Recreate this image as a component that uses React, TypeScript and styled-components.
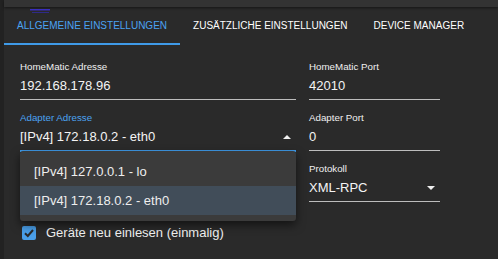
import { createGlobalStyle, styled } from 'styled-components'

const GlobalStyle = createGlobalStyle`
  html, body {
    margin: 0;
    padding: 0;
    background: #2a2a2a;
    font-family: "Liberation Sans", Arial, sans-serif;
    color: #f2f2f2;
  }
`

const Page = styled.div`
  display: flex;
  width: 498px;
  height: 259px;
  overflow: hidden;
  background: #2a2a2a;
`

const SideStrip = styled.div`
  width: 4px;
  flex-shrink: 0;
  background: #222222;
`

const Main = styled.div`
  flex-grow: 1;
  display: flex;
  flex-direction: column;
`

const TopBar = styled.div`
  height: 7px;
  background: #333333;
  box-shadow: 0 1px 3px rgba(0, 0, 0, 0.5);
  padding-left: 26px;
  position: relative;
  z-index: 1;
`

const TabBar = styled.div`
  display: flex;
  height: 38px;
`

type TabProps = { $active?: boolean }
const Tab = styled.div<TabProps>`
  display: flex;
  align-items: center;
  padding: 0 13px;
  font-size: 10px;
  text-transform: uppercase;
  color: ${(p) => (p.$active ? '#4ba3f2' : '#ffffff')};
  border-bottom: 2px solid ${(p) => (p.$active ? '#3f9ae8' : 'transparent')};
  box-sizing: border-box;
`

const Content = styled.div`
  padding: 16px 0 0 16px;
`

const FieldGrid = styled.div`
  display: grid;
  grid-template-columns: 276px 131px;
  column-gap: 13px;
  row-gap: 12px;
`

type FieldProps = { $focused?: boolean }
const Field = styled.div<FieldProps>`
  position: relative;
  display: flex;
  flex-direction: column;
  border-bottom: ${(p) => (p.$focused ? '2px solid #3f9ae8' : '1px solid #bdbdbd')};
  margin-bottom: ${(p) => (p.$focused ? '-1px' : '0')};
`

const Label = styled.div<FieldProps>`
  font-size: 9.75px;
  line-height: 12px;
  color: ${(p) => (p.$focused ? '#4ba3f2' : '#f0f0f0')};
`

const Value = styled.div`
  display: flex;
  align-items: center;
  justify-content: space-between;
  margin-top: 3px;
  padding-bottom: 3px;
  height: 20px;
  font-size: 13px;
  line-height: 20px;
  color: #f4f4f4;
`

const Arrow = styled.svg`
  width: 8px;
  height: 4px;
  margin-right: 5px;
  fill: #f0f0f0;
`

const Menu = styled.div`
  position: absolute;
  top: 100%;
  left: 0;
  right: 0;
  margin-top: 1px;
  padding: 6px 0;
  background: #3b3b3b;
  border-radius: 3px;
  box-shadow: 0 4px 10px rgba(0, 0, 0, 0.55);
  z-index: 2;
`

type MenuItemProps = { $selected?: boolean }
const MenuItem = styled.div<MenuItemProps>`
  height: 29px;
  display: flex;
  align-items: center;
  padding-left: 14px;
  font-size: 13px;
  color: #eeeeee;
  background: ${(p) => (p.$selected ? '#414d59' : 'transparent')};
`

const CheckRow = styled.div`
  display: flex;
  align-items: center;
  gap: 10px;
  margin-top: 23px;
  padding-left: 2px;
  font-size: 13px;
  color: #f0f0f0;
`

const CheckBox = styled.svg`
  width: 14px;
  height: 14px;
`

function ArrowIcon({ up }: { up?: boolean }) {
  return (
    <Arrow viewBox="0 0 8 4">
      {up ? <polygon points="0,4 4,0 8,4" /> : <polygon points="0,0 8,0 4,4" />}
    </Arrow>
  )
}

function App() {
  return (
    <>
      <GlobalStyle />
      <Page>
        <SideStrip />
        <Main>
          <TopBar>
            <svg width="20" height="5" viewBox="0 0 20 5">
              <rect x="0" y="0" width="20" height="1.5" fill="#3b2fc0" />
              <rect x="2" y="3" width="17" height="1" fill="#2f2a8a" />
            </svg>
          </TopBar>
          <TabBar>
            <Tab $active>Allgemeine Einstellungen</Tab>
            <Tab>Zusätzliche Einstellungen</Tab>
            <Tab>Device Manager</Tab>
          </TabBar>
          <Content>
            <FieldGrid>
              <Field>
                <Label>HomeMatic Adresse</Label>
                <Value>192.168.178.96</Value>
              </Field>
              <Field>
                <Label>HomeMatic Port</Label>
                <Value>42010</Value>
              </Field>
              <Field $focused>
                <Label $focused>Adapter Adresse</Label>
                <Value>
                  [IPv4] 172.18.0.2 - eth0
                  <ArrowIcon up />
                </Value>
                <Menu>
                  <MenuItem>[IPv4] 127.0.0.1 - lo</MenuItem>
                  <MenuItem $selected>[IPv4] 172.18.0.2 - eth0</MenuItem>
                </Menu>
              </Field>
              <Field>
                <Label>Adapter Port</Label>
                <Value>0</Value>
              </Field>
              <div />
              <Field>
                <Label>Protokoll</Label>
                <Value>
                  XML-RPC
                  <ArrowIcon />
                </Value>
              </Field>
            </FieldGrid>
            <CheckRow>
              <CheckBox viewBox="0 0 14 14">
                <rect x="0" y="0" width="14" height="14" rx="2" fill="#4a9fe9" />
                <polyline
                  points="3,7.2 5.8,10 11,4"
                  fill="none"
                  stroke="#2a2a2a"
                  strokeWidth="2"
                />
              </CheckBox>
              Geräte neu einlesen (einmalig)
            </CheckRow>
          </Content>
        </Main>
      </Page>
    </>
  )
}

export default App
